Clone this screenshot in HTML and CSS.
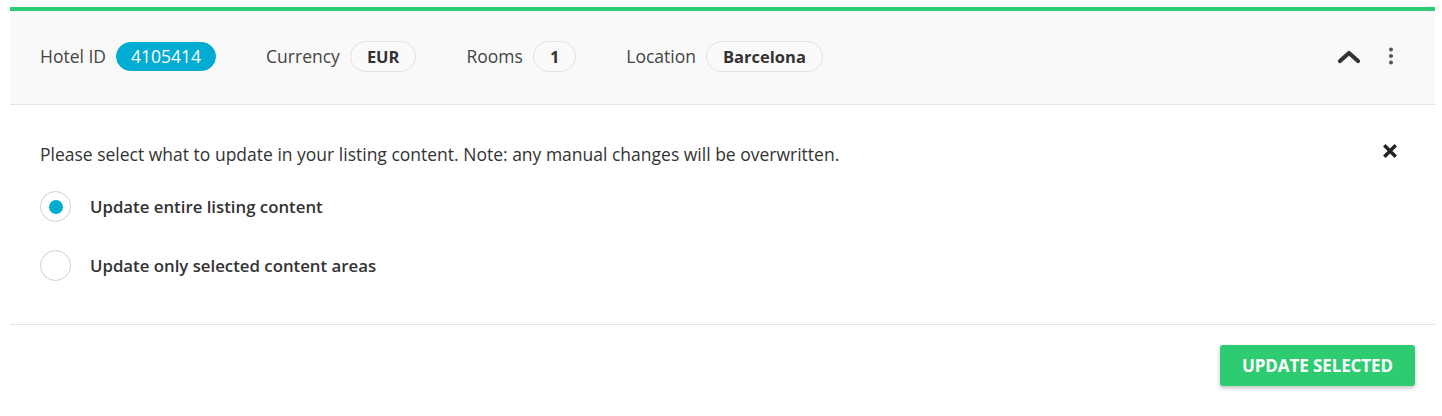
FILE: index.html
```html
<!DOCTYPE html>
<html>
<head>
<meta charset="utf-8">
<link rel="stylesheet" href="styles.css">
</head>
<body>
<div class="card">
  <div class="header">
    <div class="facts">
      <div class="fact"><span class="label">Hotel ID</span><span class="pill pill-blue">4105414</span></div>
      <div class="fact"><span class="label">Currency</span><span class="pill">EUR</span></div>
      <div class="fact"><span class="label">Rooms</span><span class="pill">1</span></div>
      <div class="fact"><span class="label">Location</span><span class="pill">Barcelona</span></div>
    </div>
    <div class="actions">
      <svg class="chev" width="24" height="16" viewBox="0 0 24 16"><path d="M3 12 L12 4 L21 12" fill="none" stroke="#333" stroke-width="4.2" stroke-linecap="round" stroke-linejoin="round"/></svg>
      <svg class="dots" width="6" height="18" viewBox="0 0 6 18"><circle cx="3" cy="2.5" r="2" fill="#555"/><circle cx="3" cy="9" r="2" fill="#555"/><circle cx="3" cy="15.5" r="2" fill="#555"/></svg>
    </div>
  </div>
  <div class="body">
    <div class="intro">
      <p class="note">Please select what to update in your listing content. Note: any manual changes will be overwritten.</p>
      <svg class="close" width="14" height="14" viewBox="0 0 14 14"><path d="M2.5 2.5 L11.5 11.5 M11.5 2.5 L2.5 11.5" stroke="#222" stroke-width="3.4" stroke-linecap="square"/></svg>
    </div>
    <label class="radio"><span class="circle checked"><span class="dot"></span></span><span class="rtext">Update entire listing content</span></label>
    <label class="radio"><span class="circle"></span><span class="rtext">Update only selected content areas</span></label>
  </div>
  <div class="footer">
    <button class="btn">UPDATE SELECTED</button>
  </div>
</div>
</body>
</html>
```
FILE: styles.css
```css
* { box-sizing: border-box; }
html, body { background: #ffffff; }
body {
  margin: 7px 7px 0 10px;
  font-family: "Open Sans", "Noto Sans", sans-serif;
  color: #333;
}
.card {
  border-top: 4px solid #2ecc71;
  background: #fff;
  box-shadow: 0 1px 4px rgba(0,0,0,0.35), 0 0 1px rgba(0,0,0,0.35);
  height: 400px;
  display: flex;
  flex-direction: column;
}
.header {
  height: 94px;
  background: #f9f9f9;
  border-bottom: 1px solid #e3e3e3;
  display: flex;
  align-items: center;
  justify-content: space-between;
  padding: 0 41px 3px 30px;
}
.facts { display: flex; align-items: center; gap: 50px; }
.fact { display: flex; align-items: center; gap: 10px; }
.label { font-size: 17.5px; color: #444; }
.pill {
  display: inline-flex;
  align-items: center;
  justify-content: center;
  height: 31px;
  padding: 0 16px;
  border-radius: 16px;
  border: 1px solid #e2e2e2;
  background: #fafafa;
  font-size: 16.5px;
  font-weight: 700;
  color: #333;
}
.pill-blue {
  background: #00acd2;
  border-color: #00acd2;
  color: #fff;
  font-weight: 400;
  font-size: 17.5px;
  height: 29px;
  padding: 0 14px;
}
.actions { display: flex; align-items: center; gap: 27px; }
.chev { display: block; margin-top: 2px; }
.dots { display: block; }
.body {
  height: 220px;
  border-bottom: 1px solid #e3e3e3;
  padding: 37px 38px 0 30px;
}
.intro { display: flex; justify-content: space-between; align-items: flex-start; }
.note { margin: 0; font-size: 17.5px; line-height: 24px; color: #333; }
.close { margin-top: 2px; }
.radio { display: flex; align-items: center; gap: 19px; margin-top: 25px; }
.radio + .radio { margin-top: 28px; }
.circle {
  width: 31px; height: 31px;
  border-radius: 50%;
  border: 1.5px solid #cfcfcf;
  display: flex; align-items: center; justify-content: center;
  background: #fff;
}
.dot { width: 14px; height: 14px; border-radius: 50%; background: #00acd2; }
.rtext { font-size: 16.8px; font-weight: 600; color: #333; }
.footer {
  flex: 1;
  display: flex;
  justify-content: flex-end;
  align-items: flex-start;
  padding: 20px 20px 0 0;
}
.btn {
  height: 41px;
  width: 195px;
  border: none;
  border-radius: 3px;
  background: #2ecc71;
  color: #fff;
  font-family: "Open Sans", sans-serif;
  font-size: 17px;
  font-weight: 700;
  letter-spacing: -0.1px;
  box-shadow: 0 2px 4px rgba(0,0,0,0.25);
}
```
